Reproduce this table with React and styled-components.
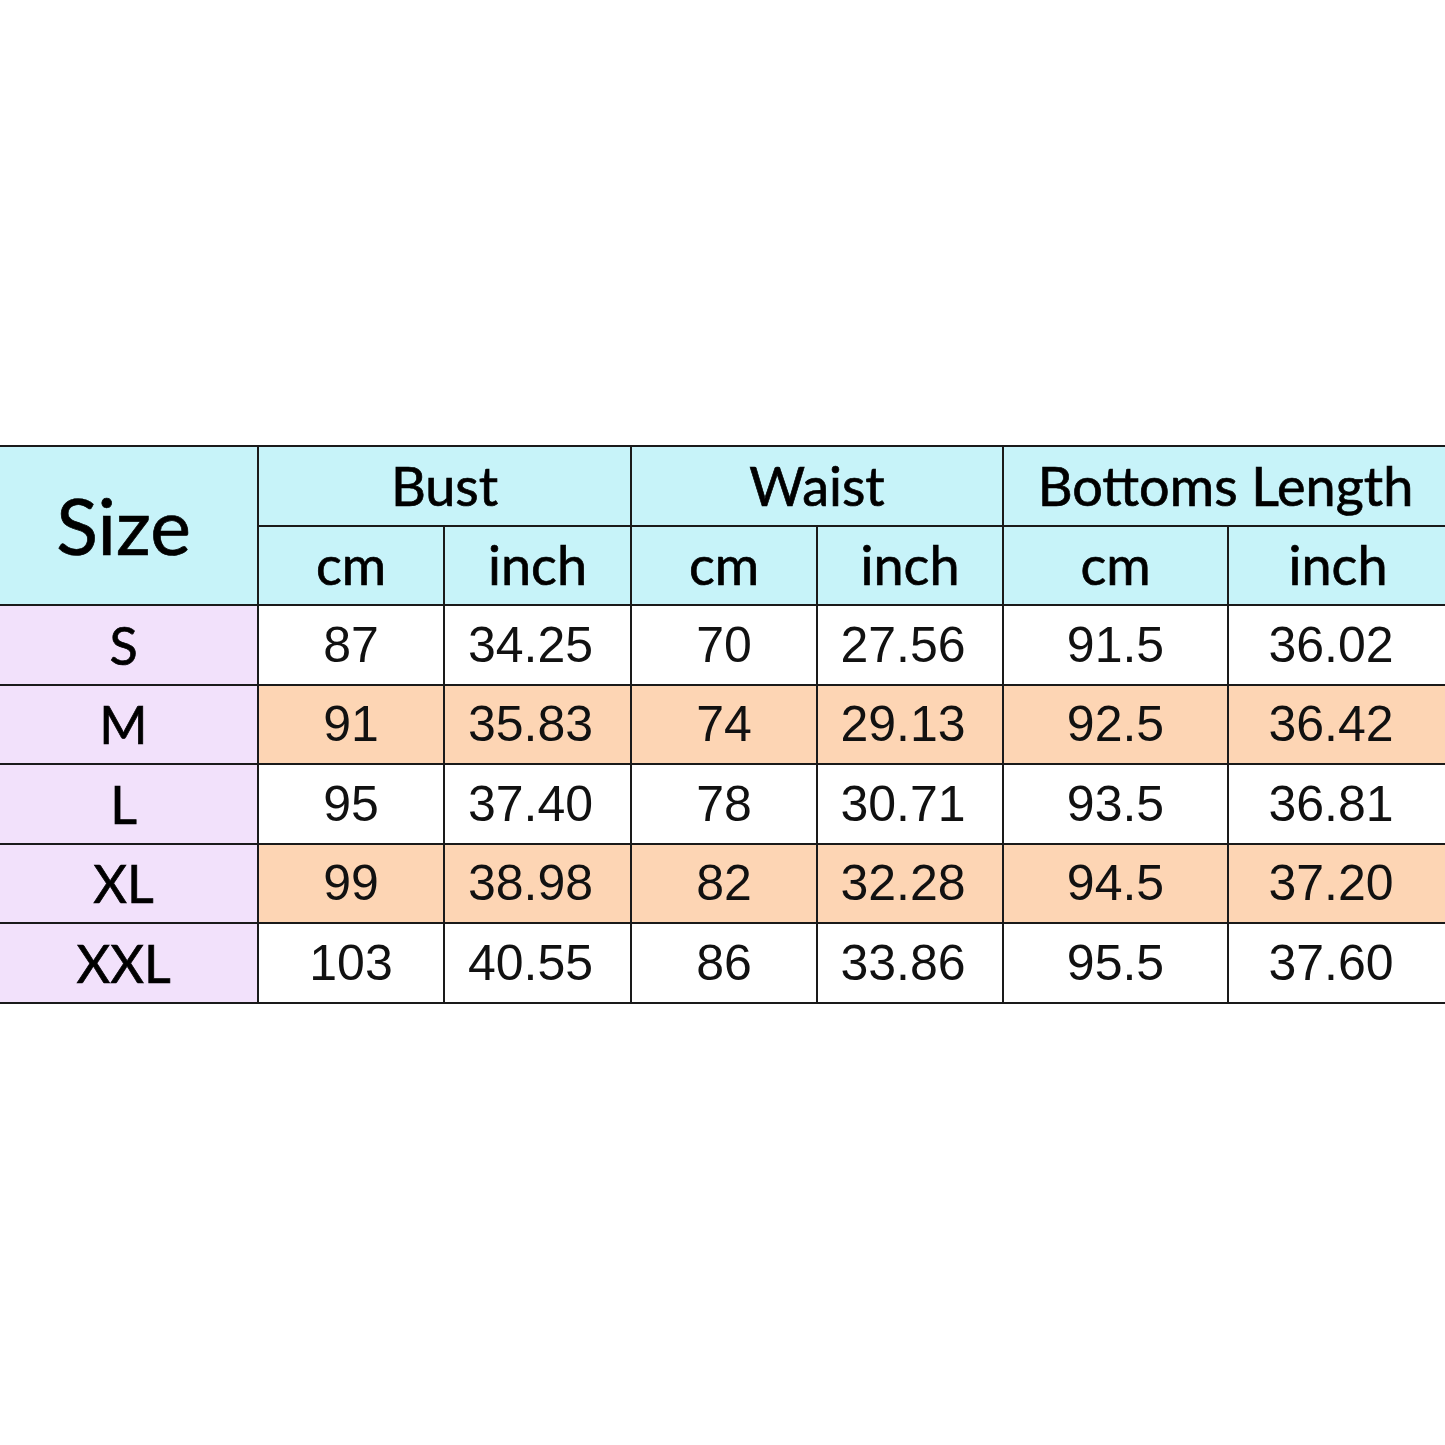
import React from "react";
import styled, { createGlobalStyle } from "styled-components";

const GlobalStyle = createGlobalStyle`
	html, body {
		margin: 0;
		padding: 0;
		background: #ffffff;
	}
`;

const colors = {
	header: "#c7f3f9",
	size: "#f2e1fb",
	stripe: "#fdd5b4",
	white: "#ffffff",
	line: "#1a1a1a",
};

const Page = styled.div`
	width: 1445px;
	height: 1445px;
	overflow: hidden;
	padding-top: 445px;
	box-sizing: border-box;
`;

const Table = styled.table`
	border-collapse: collapse;
	table-layout: fixed;
	width: 1449px;
	margin-left: -2px;
`;

const HeadCell = styled.th`
	background: ${colors.header};
	border: 2px solid ${colors.line};
	height: 77.5px;
	padding: 0 ${(props) => props.$padRight || "0"} 0 0;
	font-family: Lato, "Open Sans", sans-serif;
	font-weight: 400;
	font-size: ${(props) => props.$fontSize || "54px"};
	-webkit-text-stroke: 0.7px #000;
	color: #000;
	text-align: center;
	vertical-align: middle;
	line-height: 1;
`;

const SizeCell = styled.td`
	background: ${colors.size};
	border: 2px solid ${colors.line};
	height: 77.5px;
	padding: 0 10px 0 0;
	font-family: Lato, "Open Sans", sans-serif;
	font-size: 52px;
	-webkit-text-stroke: 0.7px #000;
	color: #000;
	text-align: center;
	line-height: 1;
`;

const ValueCell = styled.td`
	background: ${(props) => (props.$stripe ? colors.stripe : colors.white)};
	border: 2px solid ${colors.line};
	height: 77.5px;
	padding: 0 ${(props) => (props.$long ? "14px" : "0")} 0 0;
	font-family: "Liberation Sans", Arial, sans-serif;
	font-size: 50px;
	color: #111;
	text-align: center;
	line-height: 1;
`;

const rows = [
	["S", "87", "34.25", "70", "27.56", "91.5", "36.02"],
	["M", "91", "35.83", "74", "29.13", "92.5", "36.42"],
	["L", "95", "37.40", "78", "30.71", "93.5", "36.81"],
	["XL", "99", "38.98", "82", "32.28", "94.5", "37.20"],
	["XXL", "103", "40.55", "86", "33.86", "95.5", "37.60"],
];

const widths = [259, 186, 187, 186, 186, 225, 220];

export default function App() {
	return (
		<Page>
			<GlobalStyle />
			<Table>
				<colgroup>
					{widths.map((w, i) => (
						<col key={i} style={{ width: w }} />
					))}
				</colgroup>
				<thead>
					<tr>
						<HeadCell rowSpan={2} $fontSize="77px" $padRight="10px">
							Size
						</HeadCell>
						<HeadCell colSpan={2}>Bust</HeadCell>
						<HeadCell colSpan={2}>Waist</HeadCell>
						<HeadCell colSpan={2}>Bottoms Length</HeadCell>
					</tr>
					<tr>
						{["cm", "inch", "cm", "inch", "cm", "inch"].map((t, i) => (
							<HeadCell key={i}>{t}</HeadCell>
						))}
					</tr>
				</thead>
				<tbody>
					{rows.map((row, r) => (
						<tr key={row[0]}>
							<SizeCell>{row[0]}</SizeCell>
							{row.slice(1).map((v, i) => (
								<ValueCell
									key={i}
									$stripe={r % 2 === 1}
									$long={v.length > 4}
								>
									{v}
								</ValueCell>
							))}
						</tr>
					))}
				</tbody>
			</Table>
		</Page>
	);
}
